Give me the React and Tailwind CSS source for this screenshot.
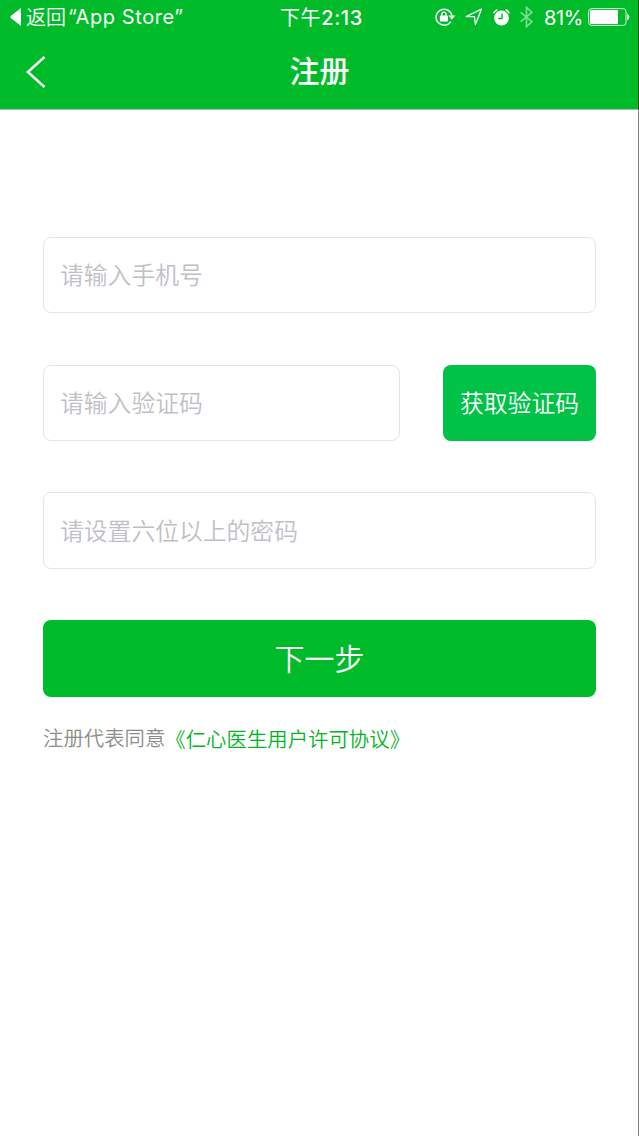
import { useState } from 'react';

function RotationLockIcon() {
  return (
    <svg width="21" height="18" viewBox="0 0 21 18" fill="none">
      <path d="M15.8 13.6A8 8 0 1 1 16.9 7.5" stroke="white" strokeWidth="1.5" />
      <path d="M13.4 7.6h7L16.9 11.8z" fill="white" />
      <rect x="4.9" y="7.6" width="8" height="5.8" rx="0.6" fill="white" />
      <path d="M6.8 8.2V6.2a2.1 2.1 0 0 1 4.2 0v2" stroke="white" strokeWidth="1.3" />
    </svg>
  );
}

function LocationIcon() {
  return (
    <svg width="18" height="18" viewBox="0 0 18 18" fill="none">
      <path d="M1.2 8.6 16.4 1.2 10.4 16.6 9.4 8.7z" stroke="white" strokeWidth="1.3" strokeLinejoin="round" />
    </svg>
  );
}

function AlarmIcon() {
  return (
    <svg width="17" height="17" viewBox="0 0 17 17" fill="none">
      <circle cx="8.5" cy="9" r="7.4" fill="white" />
      <path d="M0.9 3.8A8.5 8.5 0 0 1 3.8 1M13.2 1a8.5 8.5 0 0 1 2.9 2.8" stroke="white" strokeWidth="1.5" strokeLinecap="round" />
      <path d="M9 4.4v5.1H5.2" stroke="#00bb29" strokeWidth="1.4" />
    </svg>
  );
}

function BluetoothIcon() {
  return (
    <svg width="13" height="22" viewBox="0 0 13 22" fill="none">
      <path d="M0.7 6.3 11.9 15.7 6.5 20.6V1.4l5.4 4.9L0.7 15.7" stroke="white" strokeOpacity="0.5" strokeWidth="1.6" />
    </svg>
  );
}

function BatteryIcon() {
  return (
    <svg width="42" height="18" viewBox="0 0 42 18" fill="none">
      <rect x="0.6" y="0.6" width="37.4" height="16.8" rx="3" stroke="white" strokeOpacity="0.85" />
      <rect x="2" y="2" width="28" height="14" rx="1.2" fill="white" />
      <path d="M39.2 5.8c2.8.7 2.8 5.7 0 6.4z" fill="white" />
    </svg>
  );
}

function StatusBar() {
  return (
    <div className="flex h-[34px] items-center text-white">
      <div className="flex w-[280px] items-center pl-[10px] text-[20px] whitespace-nowrap">
        <svg width="11" height="18" viewBox="0 0 11 18" className="mr-[5px]">
          <path d="M11 0v18L1 10.2q-1.2-1.2 0-2.4z" fill="white" />
        </svg>
        <span className="pt-px font-[350]">返回</span>
        <span className="ml-[2px] tracking-[0.6px]">“App Store”</span>
      </div>
      <div className="w-[83px] pt-px text-[20px] font-medium tracking-[0.6px] whitespace-nowrap">
        <span className="font-normal">下午</span>2:13
      </div>
      <div className="ml-[72px] flex items-center">
        <RotationLockIcon />
        <div className="ml-[9px]"><LocationIcon /></div>
        <div className="ml-[10px]"><AlarmIcon /></div>
        <div className="ml-[10px]"><BluetoothIcon /></div>
        <span className="ml-[11px] w-[44px] pt-px text-[20px] tracking-[-0.4px]">81%</span>
        <BatteryIcon />
      </div>
    </div>
  );
}

function Field({ className = '', ...props }) {
  return (
    <input
      {...props}
      className={`rounded-lg border border-[#e5e5e5] bg-white px-[16px] pt-px text-[23.8px] font-[350] text-[#333333] outline-none placeholder:text-[#bfbfc7] ${className}`}
    />
  );
}

export default function App() {
  const [phone, setPhone] = useState('');
  const [code, setCode] = useState('');
  const [password, setPassword] = useState('');

  return (
    <div className="relative h-[1136px] w-[639px] overflow-hidden bg-white font-['Inter','Noto_Sans_CJK_SC',sans-serif]">
      <header className="h-[110px] border-b border-[#b5b5b5] bg-[#00bb29]">
        <StatusBar />
        <div className="flex h-[76px] items-center">
          <button className="w-[100px] pl-[26px]">
            <svg width="20" height="32" viewBox="0 0 20 32" fill="none">
              <path d="M18.5 1 1.8 16l16.7 15" stroke="white" strokeWidth="2.4" />
            </svg>
          </button>
          <h1 className="flex-1 pr-px pb-[2px] text-center text-[30px] leading-[44px] font-medium text-white">注册</h1>
          <div className="w-[99px]" />
        </div>
      </header>

      <form className="flex flex-col px-[43px] pt-[127px]" onSubmit={e => e.preventDefault()}>
        <Field
          className="h-[76px]"
          type="tel"
          placeholder="请输入手机号"
          value={phone}
          onChange={e => setPhone(e.target.value)}
        />
        <div className="mt-[52px] flex justify-between">
          <Field
            className="h-[76px] w-[357px]"
            placeholder="请输入验证码"
            value={code}
            onChange={e => setCode(e.target.value)}
          />
          <button type="button" className="h-[76px] w-[153px] rounded-lg bg-[#00c247] pt-px text-[23.8px] font-[350] text-white">
            获取验证码
          </button>
        </div>
        <Field
          className="mt-[51px] h-[77px]"
          type="password"
          placeholder="请设置六位以上的密码"
          value={password}
          onChange={e => setPassword(e.target.value)}
        />
        <button type="submit" className="mt-[51px] h-[77px] rounded-lg bg-[#00bb29] pt-px text-[30px] font-[350] text-white">
          下一步
        </button>
        <p className="mt-[27px] flex text-[20.4px] leading-[30px] font-[350] text-[#8c8c8c]">
          注册代表同意
          <a className="pt-px text-[#00b51e]">《仁心医生用户许可协议》</a>
        </p>
      </form>

      {/* hairline on the right edge, over both header and page */}
      <div className="absolute inset-y-0 right-0 w-px bg-black/50" />
    </div>
  );
}
